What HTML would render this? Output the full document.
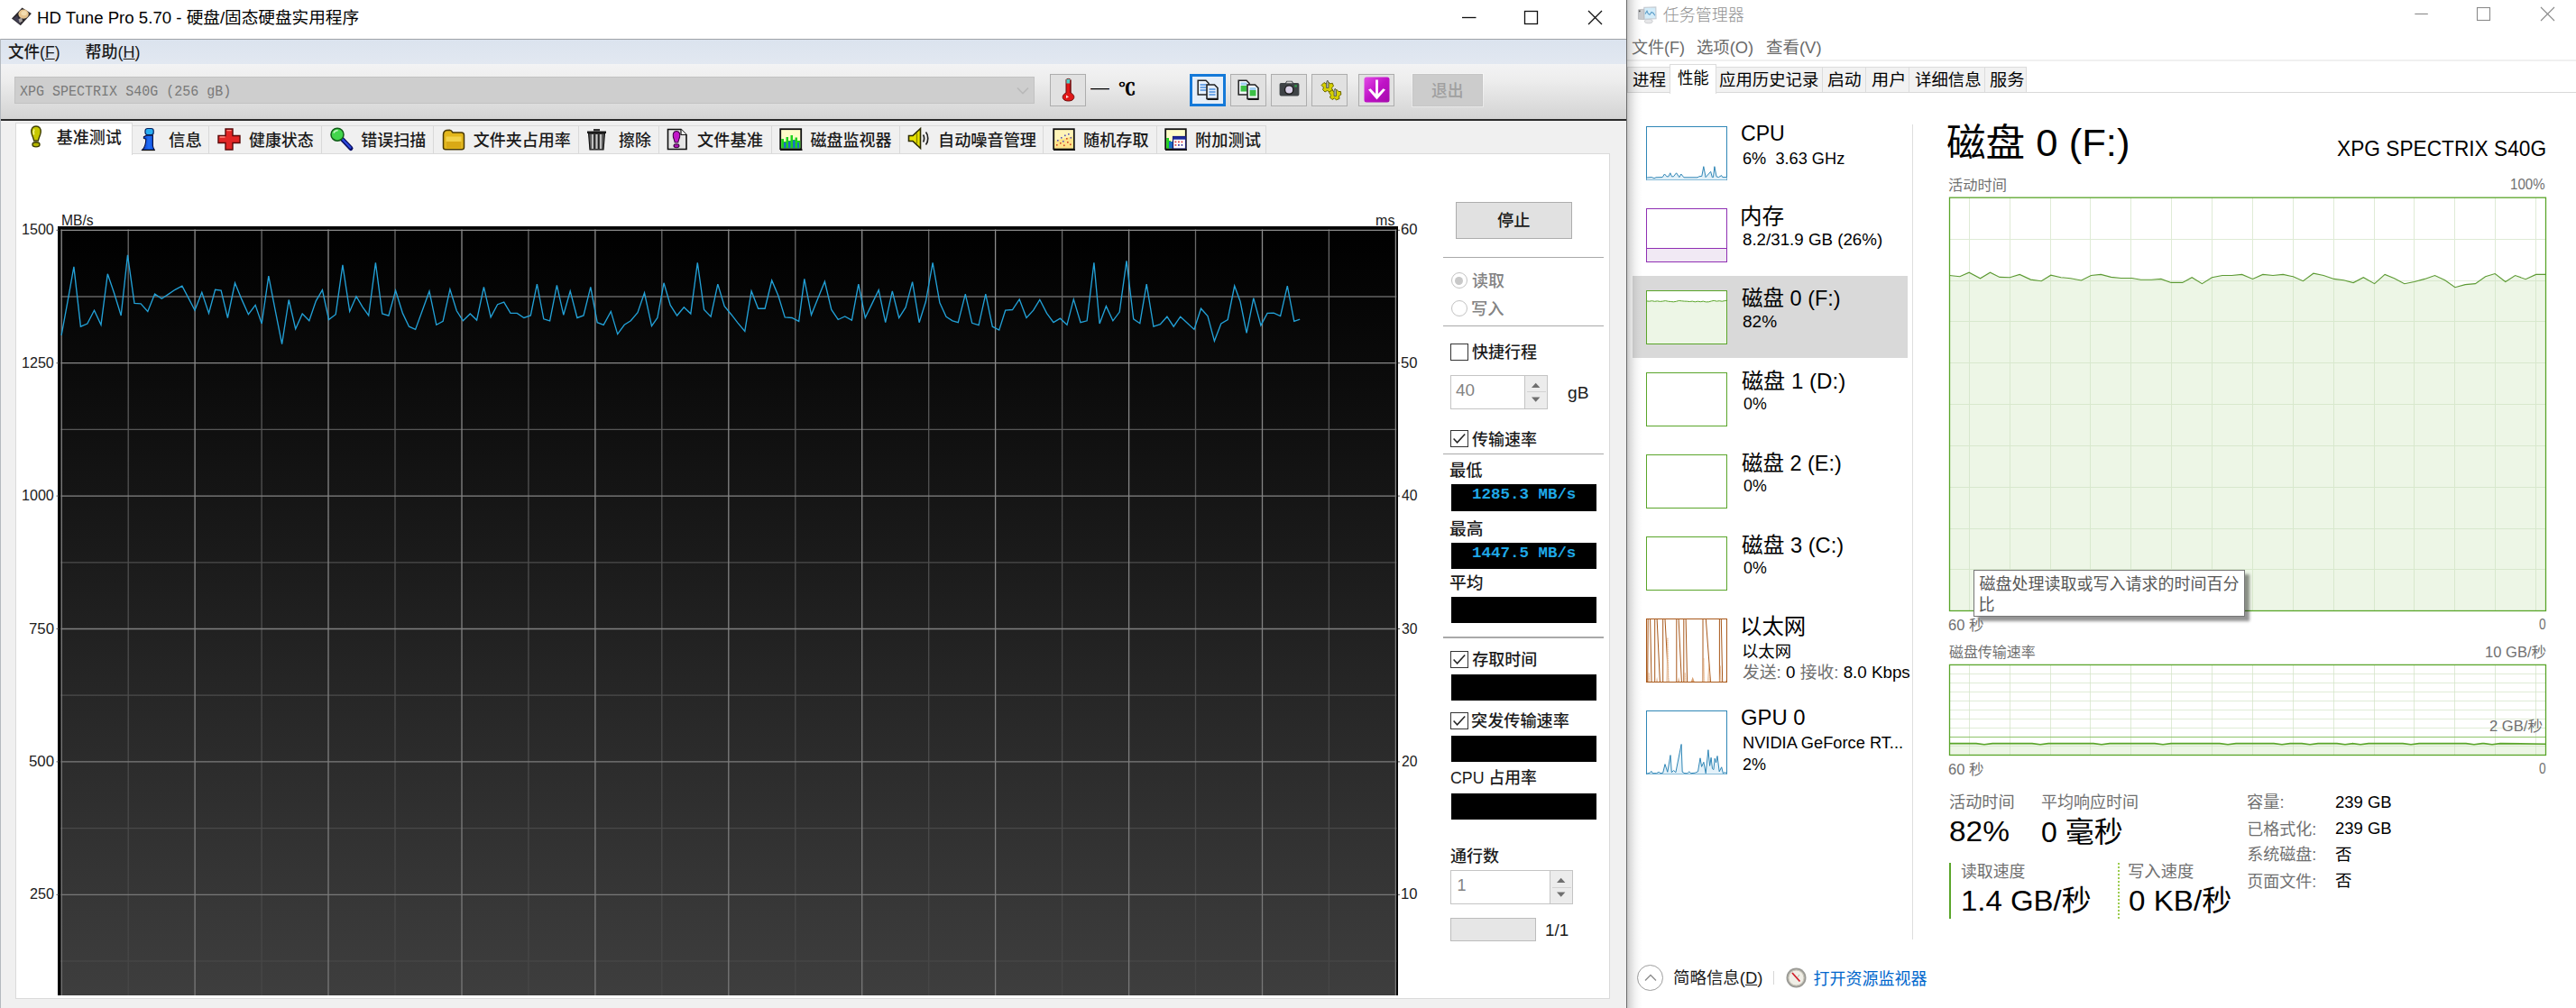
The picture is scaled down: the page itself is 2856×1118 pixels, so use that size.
<!DOCTYPE html>
<html lang="zh-CN"><head><meta charset="utf-8"><title>HD Tune Pro / 任务管理器</title>
<style>
html,body{margin:0;padding:0}
body{width:2856px;height:1118px;position:relative;overflow:hidden;background:#fff}
.t{position:absolute;white-space:nowrap;transform-origin:0 0;display:block}
.b{position:absolute;box-sizing:border-box}
svg{position:absolute;overflow:visible}
</style></head>
<body>
<!-- ================= HD Tune window ================= -->
<div class="b" style="left:0;top:0;width:1804px;height:1118px;background:#f0f0f0"></div>
<div class="b" style="left:0;top:0;width:1804px;height:43px;background:#fff"></div>
<div class="b" style="left:0;top:43px;width:1804px;height:1px;background:#9fa3a8"></div>
<div class="b" style="left:0;top:44px;width:1804px;height:27px;background:linear-gradient(#dbe3ee,#e2e8f1)"></div>
<div class="b" style="left:0;top:71px;width:1804px;height:61px;background:linear-gradient(#f3f3f4 0%,#ededed 30%,#e2e2e2 60%,#d3d3d3 100%)"></div>
<div class="b" style="left:0;top:132px;width:1804px;height:2px;background:#2a2a2a"></div>
<div class="b" style="left:0;top:43px;width:1px;height:1075px;background:#b4b9bf"></div>
<!-- window controls -->
<svg style="left:1610px;top:0" width="190" height="43" viewBox="0 0 190 43" fill="none" stroke="#111" stroke-width="1.3">
<path d="M11 19.5H26.5"/><rect x="80.5" y="12.5" width="14" height="14"/><path d="M151 12L166 27M166 12L151 27"/></svg>
<!-- app icon -->
<svg style="left:12px;top:8px" width="24" height="21" viewBox="0 0 24 21">
<path d="M12.5 .6L22.9 6.9L10.8 20.2L1 12.5Z" fill="#2b282c"/><path d="M2.6 12.7L7 9.2L11.4 17.8L10.6 19Z" fill="#403e52"/><ellipse cx="14.1" cy="7.6" rx="5.7" ry="5.1" fill="#e6c48e"/><ellipse cx="14.6" cy="6.6" rx="3.2" ry="2.6" fill="#f3ddb0"/><path d="M8.5 13.2L12.2 11.4L13 15.6L9.8 17.2Z" fill="#a9a3a0"/></svg>
<!-- combo -->
<div class="b" style="left:16px;top:85px;width:1131px;height:30px;background:#cecece;border:1px solid #c2c2c2"></div>
<svg style="left:1127px;top:96px" width="14" height="9" viewBox="0 0 14 9" fill="none" stroke="#b9b9b9" stroke-width="1.6"><path d="M1 1.5L7 7.5L13 1.5"/></svg>
<!-- toolbar buttons -->
<div class="b" style="left:1164px;top:82px;width:40px;height:36px;background:#e1e1e1;border:1px solid #adadad"></div>
<div class="b" style="left:1318.6px;top:82px;width:40.4px;height:36px;background:#e5eef8;border:3px solid #1479d8"></div>
<div class="b" style="left:1364px;top:82px;width:40px;height:36px;background:#e1e1e1;border:1px solid #adadad"></div>
<div class="b" style="left:1409px;top:82px;width:40px;height:36px;background:#e1e1e1;border:1px solid #adadad"></div>
<div class="b" style="left:1454px;top:82px;width:40px;height:36px;background:#e1e1e1;border:1px solid #adadad"></div>
<div class="b" style="left:1506px;top:82px;width:40px;height:36px;background:#e1e1e1;border:1px solid #adadad"></div>
<div class="b" style="left:1566px;top:82px;width:78px;height:36px;background:#cccccc;border:1px solid #c6c6c6;box-shadow:0 0 0 1px rgba(255,255,255,.35)"></div>
<!-- tab strip -->
<div class="b" style="left:146px;top:139px;width:1258px;height:31px;background:#f0f0f0;border:1px solid #d9d9d9;border-bottom:none"></div>
<div class="b" style="left:231px;top:140px;width:1px;height:30px;background:#d9d9d9"></div>
<div class="b" style="left:356px;top:140px;width:1px;height:30px;background:#d9d9d9"></div>
<div class="b" style="left:480px;top:140px;width:1px;height:30px;background:#d9d9d9"></div>
<div class="b" style="left:640.5px;top:140px;width:1px;height:30px;background:#d9d9d9"></div>
<div class="b" style="left:730px;top:140px;width:1px;height:30px;background:#d9d9d9"></div>
<div class="b" style="left:855px;top:140px;width:1px;height:30px;background:#d9d9d9"></div>
<div class="b" style="left:996.5px;top:140px;width:1px;height:30px;background:#d9d9d9"></div>
<div class="b" style="left:1156px;top:140px;width:1px;height:30px;background:#d9d9d9"></div>
<div class="b" style="left:1281.5px;top:140px;width:1px;height:30px;background:#d9d9d9"></div>
<!-- white page -->
<div class="b" style="left:17px;top:170px;width:1768px;height:938px;background:#fff;border:1px solid #dadada"></div>
<div class="b" style="left:17px;top:136px;width:130px;height:36px;background:#fff;border:1px solid #dadada;border-bottom:none"></div>
<!-- right window edge + shadow -->
<div class="b" style="left:1802.8px;top:0;width:1.3px;height:1118px;background:#6a6a6a"></div>

<!-- HD Tune benchmark chart -->
<div class="b" style="left:64.2px;top:251.2px;width:1485.5px;height:852.8px;background:#000"></div>
<div class="b" style="left:67.6px;top:254.6px;width:1480.6000000000001px;height:849.4px;background:linear-gradient(#000 0%,#0d0d0d 22%,#262626 60%,#3e3e3e 100%)"></div>
<svg style="left:0;top:0" width="1804" height="1118" viewBox="0 0 1804 1118" fill="none">
<defs><linearGradient id="gmi" gradientUnits="userSpaceOnUse" x1="0" y1="255" x2="0" y2="1104"><stop offset="0" stop-color="#6a6a6a"/><stop offset=".35" stop-color="#505050"/><stop offset="1" stop-color="#464646"/></linearGradient><linearGradient id="gma" gradientUnits="userSpaceOnUse" x1="0" y1="255" x2="0" y2="1104"><stop offset="0" stop-color="#8c8c8c"/><stop offset="1" stop-color="#777"/></linearGradient></defs>
<path d="M142.2 254.5V1104M290.1 254.5V1104M438 254.5V1104M585.9 254.5V1104M733.8 254.5V1104M881.8 254.5V1104M1029.7 254.5V1104M1177.6 254.5V1104M1325.5 254.5V1104M1473.4 254.5V1104" stroke="url(#gmi)" stroke-width="1.3"/>
<path d="M67.5 329H1548.3" stroke="#636363" stroke-width="1.3"/>
<path d="M67.5 476.4H1548.3" stroke="#565656" stroke-width="1.3"/>
<path d="M67.5 623.8H1548.3" stroke="#4e4e4e" stroke-width="1.3"/>
<path d="M67.5 771.2H1548.3" stroke="#4c4c4c" stroke-width="1.3"/>
<path d="M67.5 918.6H1548.3" stroke="#494949" stroke-width="1.3"/>
<path d="M67.5 1066H1548.3" stroke="#464646" stroke-width="1.3"/>
<path d="M68.2 254.5V1104M216.1 254.5V1104M364 254.5V1104M512 254.5V1104M659.9 254.5V1104M807.8 254.5V1104M955.7 254.5V1104M1103.6 254.5V1104M1251.6 254.5V1104M1399.5 254.5V1104M1547.4 254.5V1104" stroke="url(#gma)" stroke-width="1.3"/>
<path d="M67.5 255.3H1548.3" stroke="#8b8b8b" stroke-width="1.3"/>
<path d="M67.5 402.7H1548.3" stroke="#888888" stroke-width="1.3"/>
<path d="M67.5 550.1H1548.3" stroke="#848484" stroke-width="1.3"/>
<path d="M67.5 697.5H1548.3" stroke="#818181" stroke-width="1.3"/>
<path d="M67.5 844.9H1548.3" stroke="#7d7d7d" stroke-width="1.3"/>
<path d="M67.5 992.3H1548.3" stroke="#797979" stroke-width="1.3"/>
<path d="M62.5 255.3H65M1550 255.3H1552M62.5 402.7H65M1550 402.7H1552M62.5 550.1H65M1550 550.1H1552M62.5 697.5H65M1550 697.5H1552M62.5 844.9H65M1550 844.9H1552M62.5 992.3H65M1550 992.3H1552" stroke="#555" stroke-width="1"/>
<path d="M68.1 371.9 L75.1 333.8 L81.9 295.8 L89.4 362.2 L96.8 359 L104.5 344.2 L112 360.3 L119.3 303.8 L126.7 325.5 L134.2 350 L141.5 282.9 L149 336.4 L156.1 336.8 L163.8 345.4 L171.6 326.1 L179.3 331.3 L187 326.1 L194.1 321.3 L201.9 317.1 L209 330.6 L216 344.2 L223.8 324.2 L231.5 347.4 L238.6 321.3 L245.1 322.2 L252.4 352.5 L260.5 313.8 L267.9 331.9 L275.4 348.7 L283.1 338.4 L290.2 359 L297.8 306.1 L305.1 343.8 L312.6 381.6 L320.2 332.5 L327.7 364.8 L335.2 348 L342.8 355.8 L350.3 333.8 L357.4 321.6 L364.5 354.5 L372.2 348.7 L379.9 293.9 L387.7 345.4 L395 328.7 L401.9 340.3 L408.7 350 L416.4 291.3 L423.8 348 L430.9 350.2 L438.6 322.2 L446.4 347.4 L453.5 362.2 L460.6 365.4 L468.3 344.2 L476 322.9 L483.8 360.3 L491.1 356.4 L498.9 320.9 L506.3 344.8 L513.4 355.8 L521.3 348 L528.6 355.1 L536.4 318.4 L544.1 351.9 L551.6 337.7 L558.7 335.1 L566 347.4 L573.3 347.4 L580.9 352.5 L588.3 350 L595.4 315.1 L602.8 353.8 L609.6 355.8 L617.4 316.4 L624.8 349.3 L632.2 322.9 L639.9 352.5 L647 350 L654.8 318.4 L662.2 357.7 L669.2 360.3 L677.3 345.4 L684.7 370.6 L692.2 360.3 L699.3 355.8 L707 346.7 L714.5 324.8 L722.5 361.6 L728.9 352.5 L736 313.8 L743.2 338.4 L750.6 350 L758.3 340.7 L765.8 348 L773.3 291.3 L780.6 343.5 L788.1 351.2 L795.8 315.1 L803.2 339.6 L810.7 348.7 L818 358.1 L825.8 367.4 L833.1 322.9 L840.6 342.2 L848.1 342.2 L855.7 311 L862.9 328 L870.2 351.9 L878 352.5 L885.7 356.4 L891.8 309.3 L899.5 349.3 L907 330.6 L914.4 312.3 L921.8 343.5 L929.2 354.5 L936.7 351 L944.4 355.1 L951.8 315.1 L959.3 352.5 L966.7 337.1 L974.2 321.6 L981.7 357.7 L989.3 322.9 L996.7 352.5 L1004.1 340.9 L1011.6 312.6 L1019.1 357.7 L1026.4 334.5 L1034.1 291.3 L1041.9 335.8 L1049 351.2 L1056.1 355.8 L1062.3 357.7 L1070.3 326.1 L1077.7 358.3 L1085.1 360.7 L1092.8 326.1 L1100.3 362.2 L1107.7 366.1 L1114.7 344.2 L1122.5 343.5 L1130.2 331.9 L1138 352.5 L1145.7 344.2 L1152.8 332.3 L1160.5 347.4 L1168 357.7 L1175.4 353.2 L1183 360.3 L1190.3 331.9 L1198 357.7 L1205.1 355.8 L1212.9 291.3 L1219.1 359 L1226.4 339.6 L1233.9 355.8 L1241.2 346.1 L1249 289.3 L1256.7 353.8 L1263.8 358.7 L1271.2 315.1 L1278.9 362.2 L1286.4 359.6 L1293.9 351.2 L1301.2 362.2 L1308.7 351.2 L1316.3 358.3 L1324 365.4 L1331.5 342.2 L1339 350.6 L1346.4 378.3 L1353.8 359 L1361.2 354.5 L1368.7 317.1 L1375.1 334.5 L1382.1 369.3 L1389.8 330.6 L1397.9 360.9 L1405.1 347.4 L1412.2 347.1 L1419.6 350.6 L1427.3 317.1 L1434.8 356.4 L1441.2 354.1" stroke="#22a0d6" stroke-width="1.35" stroke-linejoin="miter"/>
</svg>
<!-- ================= HD Tune right-hand panel ================= -->
<div class="b" style="left:1614px;top:223.5px;width:129px;height:41px;background:#e1e1e1;border:1px solid #adadad"></div>
<div class="b" style="left:1600px;top:284.5px;width:177.5px;height:1.4px;background:#a9a9a9"></div>
<div class="b" style="left:1600px;top:361px;width:177.5px;height:1.4px;background:#a9a9a9"></div>
<div class="b" style="left:1600px;top:502.6px;width:177.5px;height:1.4px;background:#a9a9a9"></div>
<div class="b" style="left:1600px;top:706.4px;width:177.5px;height:1.4px;background:#a9a9a9"></div>
<!-- radios -->
<div class="b" style="left:1608.5px;top:302px;width:18px;height:18px;border-radius:50%;background:#fff;border:1.3px solid #c3c3c3"></div>
<div class="b" style="left:1613px;top:306.5px;width:9px;height:9px;border-radius:50%;background:#c8c8c8"></div>
<div class="b" style="left:1608.5px;top:333px;width:18px;height:18px;border-radius:50%;background:#fff;border:1.3px solid #c3c3c3"></div>
<!-- checkboxes -->
<div class="b" style="left:1608px;top:381px;width:19.5px;height:19px;background:#fff;border:1.6px solid #333"></div>
<div class="b" style="left:1608px;top:477px;width:19.5px;height:19px;background:#fff;border:1.6px solid #333"></div>
<div class="b" style="left:1608px;top:721.5px;width:19.5px;height:19px;background:#fff;border:1.6px solid #333"></div>
<div class="b" style="left:1608px;top:789.5px;width:19.5px;height:19px;background:#fff;border:1.6px solid #333"></div>
<svg style="left:1608px;top:477px" width="20" height="19" viewBox="0 0 20 19" fill="none" stroke="#222" stroke-width="1.5"><path d="M3.6 9.6L7.6 13.8L16.2 4.6"/></svg>
<svg style="left:1608px;top:721.5px" width="20" height="19" viewBox="0 0 20 19" fill="none" stroke="#222" stroke-width="1.5"><path d="M3.6 9.6L7.6 13.8L16.2 4.6"/></svg>
<svg style="left:1608px;top:789.5px" width="20" height="19" viewBox="0 0 20 19" fill="none" stroke="#222" stroke-width="1.5"><path d="M3.6 9.6L7.6 13.8L16.2 4.6"/></svg>
<!-- spin boxes -->
<div class="b" style="left:1608px;top:415.5px;width:108px;height:38.5px;background:#fff;border:1px solid #c4c4c4"></div>
<div class="b" style="left:1690px;top:415.5px;width:26px;height:38.5px;background:#ececec;border:1px solid #c4c4c4"></div>
<div class="b" style="left:1692.5px;top:434.2px;width:21px;height:1px;background:#d2d2d2"></div>
<svg style="left:1690px;top:415.5px" width="26" height="39" viewBox="0 0 26 39" fill="#6f6f6f"><path d="M8 14L12.7 8.8L17.4 14Z"/><path d="M8 24.5L12.7 29.7L17.4 24.5Z"/></svg>
<div class="b" style="left:1608px;top:964.7px;width:136px;height:38.8px;background:#fff;border:1px solid #c4c4c4"></div>
<div class="b" style="left:1718px;top:964.7px;width:26px;height:38.8px;background:#ececec;border:1px solid #c4c4c4"></div>
<div class="b" style="left:1720.5px;top:983.6px;width:21px;height:1px;background:#d2d2d2"></div>
<svg style="left:1718px;top:964.7px" width="26" height="39" viewBox="0 0 26 39" fill="#6f6f6f"><path d="M8 14L12.7 8.8L17.4 14Z"/><path d="M8 24.5L12.7 29.7L17.4 24.5Z"/></svg>
<!-- black value boxes -->
<div class="b" style="left:1608.8px;top:537px;width:161.2px;height:29.5px;background:#000"></div>
<div class="b" style="left:1608.8px;top:602px;width:161.2px;height:29.3px;background:#000"></div>
<div class="b" style="left:1608.8px;top:662.3px;width:161.2px;height:29px;background:#000"></div>
<div class="b" style="left:1608.8px;top:748px;width:161.2px;height:28.8px;background:#000"></div>
<div class="b" style="left:1608.8px;top:815.5px;width:161.2px;height:29px;background:#000"></div>
<div class="b" style="left:1608.8px;top:880px;width:161.2px;height:29px;background:#000"></div>
<!-- progress -->
<div class="b" style="left:1608px;top:1018.4px;width:94.5px;height:25.4px;background:#e6e6e6;border:1px solid #bcbcbc"></div>

<!-- ================= Task manager window ================= -->
<div class="b" style="left:1804px;top:0;width:1052px;height:1118px;background:#fff"></div>
<!-- title bar -->
<svg style="left:1816px;top:7px" width="21" height="20" viewBox="0 0 21 20"><ellipse cx="11.8" cy="16.6" rx="4.4" ry="2.2" fill="#e6e6e8" stroke="#c2c4c8" stroke-width=".8"/><path d="M6.8 1.4L19.8 .9L20 13.6L7 14.4Z" fill="#d3ecf9" stroke="#c5cdd4" stroke-width="1.2"/><path d="M8 8.5L10 5.2L11.4 8.4L13 9.2L15 6.4L17 7.4L18.8 10.2" fill="none" stroke="#5a9cc8" stroke-width="1.1"/><path d="M.4 3.8L6.6 3.2V14.6L.4 14.2Z" fill="#c9cbce" stroke="#b3b5b8" stroke-width=".7"/><path d="M1 4.6L2.6 4.4V6L1 6.2Z" fill="#555"/></svg>
<svg style="left:2660px;top:0" width="190" height="36" viewBox="0 0 190 36" fill="none" stroke="#8a8a8a" stroke-width="1.1"><path d="M17.3 15.5H31.8"/><rect x="86.5" y="8.5" width="14" height="14"/><path d="M157 8L172 23M172 8L157 23"/></svg>
<div class="b" style="left:1804px;top:66px;width:1052px;height:2px;background:#f0f0f0"></div>
<!-- tabs -->
<div class="b" style="left:1804px;top:73.5px;width:442.5px;height:29.5px;background:#f2f2f2;border:1px solid #dcdcdc"></div>
<div class="b" style="left:1804px;top:102px;width:1052px;height:1px;background:#d9d9d9"></div>
<div class="b" style="left:2020.2px;top:74px;width:1px;height:28px;background:#dcdcdc"></div>
<div class="b" style="left:2068.2px;top:74px;width:1px;height:28px;background:#dcdcdc"></div>
<div class="b" style="left:2116.2px;top:74px;width:1px;height:28px;background:#dcdcdc"></div>
<div class="b" style="left:2200.2px;top:74px;width:1px;height:28px;background:#dcdcdc"></div>
<div class="b" style="left:1851px;top:71px;width:51.5px;height:33px;background:#fff;border:1px solid #dcdcdc;border-bottom:none"></div>
<!-- sidebar -->
<div class="b" style="left:1810.3px;top:306px;width:304.7px;height:90.6px;background:#d9d9d9"></div>
<div class="b" style="left:2120px;top:138px;width:1px;height:904px;background:#dedede"></div>
<div class="b" style="left:1825px;top:231px;width:90px;height:60px;background:#fff;border:1px solid #8f2fb3"></div>
<div class="b" style="left:1826px;top:275px;width:88px;height:15px;background:#f1e9f4;border-top:1px solid #8f2fb3"></div>
<div class="b" style="left:1825px;top:413px;width:90px;height:60px;background:#fff;border:1px solid #5aa52a"></div>
<div class="b" style="left:1825px;top:504px;width:90px;height:60px;background:#fff;border:1px solid #5aa52a"></div>
<div class="b" style="left:1825px;top:595px;width:90px;height:60px;background:#fff;border:1px solid #5aa52a"></div>
<!-- stats markers -->
<div class="b" style="left:2161px;top:957.3px;width:2px;height:61.3px;background:#5aa52a"></div>
<div class="b" style="left:2348px;top:957.3px;width:0;height:61.3px;border-left:2px dotted #9ccc4f"></div>
<!-- footer -->
<div class="b" style="left:1815.1px;top:1070.1px;width:29px;height:29px;border-radius:50%;border:1px solid #9d9d9d;background:#fff"></div>
<svg style="left:1815.6px;top:1070.8px" width="28" height="28" viewBox="0 0 28 28" fill="none" stroke="#8c8c8c" stroke-width="1.3"><path d="M8 16.5L14 10.5L20 16.5"/></svg>
<div class="b" style="left:1966px;top:1076.5px;width:1px;height:15px;background:#d6d6d6"></div>
<svg style="left:1979.5px;top:1072.5px" width="23" height="23" viewBox="0 0 23 23"><circle cx="11.5" cy="11.5" r="11" fill="#9a9a95"/><circle cx="11.5" cy="11.5" r="8.6" fill="#f0eee6" stroke="#c9c6ba" stroke-width="1.2"/><path d="M7 6L15.5 15.5" stroke="#d0202a" stroke-width="1.8"/><path d="M15 8L12.8 11" stroke="#b9b5a6" stroke-width="1"/></svg>

<!-- Task manager graphs -->
<svg style="left:0;top:0" width="2856" height="1118" viewBox="0 0 2856 1118" fill="none">
<path d="M2161.5 305.5 L2172.8 306.8 L2183.1 302.2 L2195.5 308.8 L2206.5 302.2 L2217 307.4 L2228.3 307.7 L2239.2 304.4 L2251.4 310.1 L2263.2 311.7 L2273.8 305.2 L2285 307.7 L2295.6 308.8 L2307.5 311 L2318.4 305.5 L2329.2 304.4 L2340.5 307.4 L2351.7 308.5 L2363.6 308.5 L2373.5 310.3 L2385.3 310.3 L2395.9 309.4 L2407.1 313.4 L2419.7 313.4 L2430.2 307.7 L2441.4 314.7 L2452.4 307.7 L2463.9 305.5 L2474.4 305.5 L2485.6 304.4 L2497.5 309.4 L2508.8 304.4 L2520 305.5 L2531.2 304.4 L2542.4 306.8 L2553.4 311.7 L2564.9 303.2 L2576.1 305.5 L2587.7 309.4 L2598.5 310.7 L2609.1 313.6 L2620.3 307.7 L2632.6 314.7 L2644.1 304.4 L2654.6 308.8 L2665.8 314.7 L2676.7 312.5 L2688.3 309.4 L2699.5 305.5 L2710.7 310.7 L2721.9 318.7 L2733.2 315.6 L2744.4 314.6 L2755.6 306.8 L2766.2 303.5 L2777.8 312.5 L2788.6 305.5 L2800.1 309.7 L2811.7 304.4 L2822.5 304.4 L2822.5 677.5 L2161.5 677.5Z" fill="#edf6e6"/>
<path d="M2183.5 219.2V677.5M2228.5 219.2V677.5M2273.5 219.2V677.5M2317.5 219.2V677.5M2362.5 219.2V677.5M2407.5 219.2V677.5M2452.5 219.2V677.5M2497.5 219.2V677.5M2542.5 219.2V677.5M2587.5 219.2V677.5M2632.5 219.2V677.5M2676.5 219.2V677.5M2721.5 219.2V677.5M2766.5 219.2V677.5M2811.5 219.2V677.5M2161.5 265.5H2822.5M2161.5 311.5H2822.5M2161.5 356.5H2822.5M2161.5 402.5H2822.5M2161.5 448.5H2822.5M2161.5 494.5H2822.5M2161.5 540.5H2822.5M2161.5 586.5H2822.5M2161.5 631.5H2822.5" stroke="#cbdebd" stroke-opacity=".62" stroke-width="1" shape-rendering="crispEdges"/>
<path d="M2161.5 305.5 L2172.8 306.8 L2183.1 302.2 L2195.5 308.8 L2206.5 302.2 L2217 307.4 L2228.3 307.7 L2239.2 304.4 L2251.4 310.1 L2263.2 311.7 L2273.8 305.2 L2285 307.7 L2295.6 308.8 L2307.5 311 L2318.4 305.5 L2329.2 304.4 L2340.5 307.4 L2351.7 308.5 L2363.6 308.5 L2373.5 310.3 L2385.3 310.3 L2395.9 309.4 L2407.1 313.4 L2419.7 313.4 L2430.2 307.7 L2441.4 314.7 L2452.4 307.7 L2463.9 305.5 L2474.4 305.5 L2485.6 304.4 L2497.5 309.4 L2508.8 304.4 L2520 305.5 L2531.2 304.4 L2542.4 306.8 L2553.4 311.7 L2564.9 303.2 L2576.1 305.5 L2587.7 309.4 L2598.5 310.7 L2609.1 313.6 L2620.3 307.7 L2632.6 314.7 L2644.1 304.4 L2654.6 308.8 L2665.8 314.7 L2676.7 312.5 L2688.3 309.4 L2699.5 305.5 L2710.7 310.7 L2721.9 318.7 L2733.2 315.6 L2744.4 314.6 L2755.6 306.8 L2766.2 303.5 L2777.8 312.5 L2788.6 305.5 L2800.1 309.7 L2811.7 304.4 L2822.5 304.4" stroke="#5c9a33" stroke-width="1.1"/>
<rect x="2161.5" y="219.2" width="661.0" height="458.3" stroke="#5aa52a" stroke-width="1.3"/>
<path d="M2161.5 824.6 L2191 824.6 L2200 825.7 L2209 824.6 L2253 824.6 L2262 825.7 L2271 824.6 L2321 824.6 L2330 825.7 L2339 824.6 L2389 824.6 L2398 825.7 L2407 824.6 L2461 824.6 L2470 825.7 L2479 824.6 L2521 824.6 L2530 825.7 L2539 824.6 L2552 824.6 L2561 825.7 L2570 824.6 L2591 824.6 L2600 825.7 L2609 824.6 L2608 824.6 L2617 825.7 L2626 824.6 L2664 824.6 L2673 825.7 L2682 824.6 L2734 824.6 L2743 825.7 L2752 824.6 L2754 824.6 L2763 825.7 L2772 824.6 L2822.5 825.2 L2822.5 837.5 L2161.5 837.5Z" fill="#edf6e6"/>
<path d="M2183.5 737.4V837.5M2228.5 737.4V837.5M2273.5 737.4V837.5M2317.5 737.4V837.5M2362.5 737.4V837.5M2407.5 737.4V837.5M2452.5 737.4V837.5M2497.5 737.4V837.5M2542.5 737.4V837.5M2587.5 737.4V837.5M2632.5 737.4V837.5M2676.5 737.4V837.5M2721.5 737.4V837.5M2766.5 737.4V837.5M2811.5 737.4V837.5" stroke="#cbdebd" stroke-opacity=".62" stroke-width="1" shape-rendering="crispEdges"/>
<path d="M2161.5 747.5H2822.5M2161.5 757.5H2822.5M2161.5 767.5H2822.5M2161.5 777.5H2822.5M2161.5 787.5H2822.5M2161.5 797.5H2822.5M2161.5 807.5H2822.5M2161.5 827.5H2822.5" stroke="#d3e4c6" stroke-opacity=".7" stroke-width="1" shape-rendering="crispEdges"/>
<path d="M2161.5 817.5H2822.5" stroke="#8fc46a" stroke-width="1.2"/>
<path d="M2161.5 824.6 L2191 824.6 L2200 825.7 L2209 824.6 L2253 824.6 L2262 825.7 L2271 824.6 L2321 824.6 L2330 825.7 L2339 824.6 L2389 824.6 L2398 825.7 L2407 824.6 L2461 824.6 L2470 825.7 L2479 824.6 L2521 824.6 L2530 825.7 L2539 824.6 L2552 824.6 L2561 825.7 L2570 824.6 L2591 824.6 L2600 825.7 L2609 824.6 L2608 824.6 L2617 825.7 L2626 824.6 L2664 824.6 L2673 825.7 L2682 824.6 L2734 824.6 L2743 825.7 L2752 824.6 L2754 824.6 L2763 825.7 L2772 824.6 L2822.5 825.2" stroke="#5aa52a" stroke-width="1.6"/>
<rect x="2161.5" y="737.4" width="661.0" height="100.10000000000002" stroke="#5aa52a" stroke-width="1.3"/>
</svg>
<!-- sidebar thumbnails -->
<svg style="left:0;top:0" width="2856" height="1118" viewBox="0 0 2856 1118" fill="none">
<rect x="1825.5" y="140.5" width="89" height="59" fill="#fff" stroke="#2f86b6" stroke-width="1"/>
<path d="M1826.1 197 L1831.2 196.6 L1834 197.8 L1836 196.8 L1843.1 196.6 L1845.5 193 L1847.9 195.8 L1849.9 195.8 L1851.8 191.8 L1853.4 195.8 L1855.4 195.8 L1858.6 191.8 L1861.8 196.6 L1863.8 193 L1866.9 196.8 L1882 196.8 L1883.6 195.8 L1886.8 195.4 L1888.8 184.7 L1891.1 196.6 L1896.7 190.3 L1898.3 196.6 L1899.5 196.6 L1900.9 184.7 L1903 195.8 L1905.4 196.6 L1908.6 194.6 L1909.8 196.6 L1914.5 196.6 L1914.5 199.5 L1825.5 199.5Z" fill="#e3f1f9"/>
<path d="M1826.1 197 L1831.2 196.6 L1834 197.8 L1836 196.8 L1843.1 196.6 L1845.5 193 L1847.9 195.8 L1849.9 195.8 L1851.8 191.8 L1853.4 195.8 L1855.4 195.8 L1858.6 191.8 L1861.8 196.6 L1863.8 193 L1866.9 196.8 L1882 196.8 L1883.6 195.8 L1886.8 195.4 L1888.8 184.7 L1891.1 196.6 L1896.7 190.3 L1898.3 196.6 L1899.5 196.6 L1900.9 184.7 L1903 195.8 L1905.4 196.6 L1908.6 194.6 L1909.8 196.6 L1914.5 196.6" stroke="#2f86b6" stroke-width="1"/>
<rect x="1825.5" y="322.5" width="89" height="59" fill="#fff" stroke="#5aa52a" stroke-width="1"/>
<path d="M1825.5 333.9 L1828.5 334.2 L1831.5 333.7 L1834.5 334.3 L1837.5 333.9 L1840.5 334.4 L1843.4 334.1 L1846.4 333.6 L1849.4 334.2 L1852.4 334.5 L1855.4 334.8 L1858.4 334.3 L1861.4 333.5 L1864.4 333.8 L1867.4 334.1 L1870.3 334.2 L1873.3 334.5 L1876.3 334.1 L1879.3 334.8 L1882.3 334.2 L1885.3 334.7 L1888.3 334.1 L1891.3 334.9 L1894.3 334.8 L1897.3 334 L1900.2 333.4 L1903.2 334.1 L1906.2 333.7 L1909.2 334.2 L1912.2 333.6 L1915.2 333.3 L1914.5 381.5 L1825.5 381.5Z" fill="#edf6e6"/>
<path d="M1825.5 333.9 L1828.5 334.2 L1831.5 333.7 L1834.5 334.3 L1837.5 333.9 L1840.5 334.4 L1843.4 334.1 L1846.4 333.6 L1849.4 334.2 L1852.4 334.5 L1855.4 334.8 L1858.4 334.3 L1861.4 333.5 L1864.4 333.8 L1867.4 334.1 L1870.3 334.2 L1873.3 334.5 L1876.3 334.1 L1879.3 334.8 L1882.3 334.2 L1885.3 334.7 L1888.3 334.1 L1891.3 334.9 L1894.3 334.8 L1897.3 334 L1900.2 333.4 L1903.2 334.1 L1906.2 333.7 L1909.2 334.2 L1912.2 333.6 L1915.2 333.3" stroke="#5aa52a" stroke-width="1"/>
<rect x="1825.5" y="322.5" width="89" height="59" stroke="#5aa52a" stroke-width="1"/>
<rect x="1825.5" y="686.5" width="89" height="70" fill="#fff" stroke="#a8581a" stroke-width="1"/>
<path d="M1826.7 756.5L1827.2 686.5M1829.6 686.5L1831 756.5M1834.7 756.5L1834.7 686.5M1837.1 686.5L1840.4 756.5M1843.7 756.5L1843.7 686.5M1846 686.5L1849.8 756.5M1858.8 756.5L1858.8 686.5M1861.1 686.5L1864.4 756.5M1866.8 756.5L1866.8 686.5M1869.1 686.5L1870.6 756.5M1888 756.5L1888 686.5M1891.3 686.5L1896.5 756.5M1906.4 756.5L1906.4 686.5M1908.3 686.5L1909.7 756.5" stroke="#a8581a" stroke-width="1"/>
<path d="M1847.7 756.5L1848.9 707.4L1850 756.5ZM1888.1 756.5L1888.9 730L1889.8 756.5ZM1893.3 756.5L1894.6 736.6L1895.9 756.5ZM1906.5 756.5L1907.3 738.5L1908.2 756.5ZM1827.5 756.5L1828.1 746.1L1828.8 756.5ZM1867.4 756.5L1868.2 746.1L1868.9 756.5Z" fill="#f0d9c6" stroke="#dd9a62" stroke-width=".8" stroke-dasharray="1 1"/>
<path d="M1874.6 756.5L1876.7 750.8L1878.8 756.5ZM1913.1 756.5L1914.4 752.2L1914.5 756.5ZM1860.2 756.5L1861.1 750.8L1862.1 756.5ZM1836.3 756.5L1837.1 750.8L1837.8 756.5Z" fill="#d9a071"/>
<rect x="1825.5" y="686.5" width="89" height="70" stroke="#a8581a" stroke-width="1"/>
<rect x="1825.5" y="788.5" width="89" height="70" fill="#fff" stroke="#2f86b6" stroke-width="1"/>
<path d="M1826 858.1 L1829.1 857.2 L1831 855.4 L1832.3 857.7 L1836.4 857.7 L1839.2 856.3 L1841 857.7 L1843.7 857.2 L1846 847.6 L1848.8 856.3 L1852 837.6 L1853.3 856.7 L1855.6 854.5 L1857.9 856.7 L1864.1 825.5 L1865.2 856.3 L1867.9 857.7 L1870.7 857.7 L1872.9 855.8 L1874.8 857.7 L1879.3 857.2 L1882.5 855.8 L1885 840.8 L1886.6 850.4 L1888.9 845.3 L1891.2 857.7 L1893.9 831.7 L1895.6 849.4 L1897.1 840.3 L1898.5 852.6 L1899.9 853.6 L1901.2 841.2 L1902.6 845.8 L1904 838.5 L1906.2 855.8 L1908.7 850.8 L1910.4 857.7 L1912.2 856.7 L1914.9 857.7 L1914.5 858.5 L1825.5 858.5Z" fill="#e3f1f9"/>
<path d="M1826 858.1 L1829.1 857.2 L1831 855.4 L1832.3 857.7 L1836.4 857.7 L1839.2 856.3 L1841 857.7 L1843.7 857.2 L1846 847.6 L1848.8 856.3 L1852 837.6 L1853.3 856.7 L1855.6 854.5 L1857.9 856.7 L1864.1 825.5 L1865.2 856.3 L1867.9 857.7 L1870.7 857.7 L1872.9 855.8 L1874.8 857.7 L1879.3 857.2 L1882.5 855.8 L1885 840.8 L1886.6 850.4 L1888.9 845.3 L1891.2 857.7 L1893.9 831.7 L1895.6 849.4 L1897.1 840.3 L1898.5 852.6 L1899.9 853.6 L1901.2 841.2 L1902.6 845.8 L1904 838.5 L1906.2 855.8 L1908.7 850.8 L1910.4 857.7 L1912.2 856.7 L1914.9 857.7" stroke="#2f86b6" stroke-width="1"/>
</svg>
<!-- ================= icons ================= -->
<!-- tab 1: bulb / exclamation -->
<svg style="left:33px;top:138.5px" width="14" height="25" viewBox="0 0 14 25"><path d="M7 1C3.2 1 1.5 4 1.8 7.5C2.1 11 4 13.5 4.6 17H9.4C10 13.5 11.9 11 12.2 7.5C12.5 4 10.8 1 7 1Z" fill="#c6c800" stroke="#3d3d00" stroke-width="1.4"/><path d="M5 4.5C4 6 4 8.5 4.6 10.5" stroke="#f4f58a" stroke-width="1.6" fill="none"/><ellipse cx="7" cy="21.3" rx="4" ry="2.6" fill="#b4b600" stroke="#3d3d00" stroke-width="1.4"/></svg>
<!-- tab 2: info -->
<svg style="left:156px;top:142px" width="17" height="25" viewBox="0 0 17 25"><defs><linearGradient id="ig" x1="0" y1="0" x2="1" y2="0"><stop offset="0" stop-color="#0b35c9"/><stop offset=".55" stop-color="#1f6ef5"/><stop offset="1" stop-color="#0d48de"/></linearGradient></defs><rect x="5" y=".5" width="9.2" height="7" rx="2.6" fill="#29aef2" stroke="#08205f" stroke-width="1.2"/><path d="M3.4 9.8L6.2 8.2H13.4V19.5C13.6 21.6 14.6 23 15.2 24.4H1.6C2.8 23 5.6 21 5.8 12.2L3.4 11.4Z" fill="url(#ig)" stroke="#060e3a" stroke-width="1.1"/><path d="M1.4 24.5H15.6" stroke="#111" stroke-width="1.2"/></svg>
<!-- tab 3: red cross -->
<svg style="left:240.5px;top:142px" width="26" height="25" viewBox="0 0 26 25"><path d="M9 1H17V8.5H25V16.5H17V24H9V16.5H1V8.5H9Z" fill="#e22626" stroke="#5a0a0a" stroke-width="1.4"/><path d="M10.5 2.6H15.5M2.6 10H8.5" stroke="#ff8d86" stroke-width="1.4"/></svg>
<!-- tab 4: magnifier -->
<svg style="left:365px;top:141px" width="27" height="26" viewBox="0 0 27 26"><path d="M14 13L24 23.5" stroke="#0a0f66" stroke-width="5" stroke-linecap="round"/><path d="M14.5 13.2L23.5 22.8" stroke="#2c49e0" stroke-width="2.2" stroke-linecap="round"/><circle cx="9" cy="8.2" r="7" fill="#43d64c" stroke="#115c18" stroke-width="1.5"/><path d="M5 6.5C5.8 4.5 7.6 3.6 9.6 3.8" stroke="#c6f7c6" stroke-width="1.6" fill="none"/></svg>
<!-- tab 5: folder -->
<svg style="left:489.5px;top:142.5px" width="26" height="24" viewBox="0 0 26 24"><path d="M1.5 6.5C1.5 3.5 3 2 5 1.5L8.5 1.2C10 1.2 11 2.5 12 4H21.5C23.5 4 24.5 5.3 24.5 7V20.5C24.5 22 23.5 22.8 22 22.8H4C2.5 22.8 1.5 22 1.5 20.5Z" fill="#e3b71c" stroke="#4a3a05" stroke-width="1.5"/><path d="M4.5 8.5H21.5V21H4.5Z" fill="#f2d24a"/><path d="M4.5 14H21.5V21H4.5Z" fill="#d9a915"/></svg>
<!-- tab 6: trash -->
<svg style="left:650px;top:142px" width="23" height="25" viewBox="0 0 23 25"><path d="M1 3.5H22V6H1Z" fill="#1c1c1c"/><path d="M8 1H15V3.5H8Z" fill="#333"/><path d="M2.6 6H20.4L19 24H4Z" fill="#5d5d5d" stroke="#111" stroke-width="1.2"/><path d="M7 7V23M11.5 7V23M16 7V23" stroke="#c9c9c9" stroke-width="1.8"/><path d="M9 7V23M13.7 7V23" stroke="#222" stroke-width="1.4"/></svg>
<!-- tab 7: file benchmark -->
<svg style="left:739px;top:142px" width="24" height="25" viewBox="0 0 24 25"><path d="M1.5 1.5H16L22 7.5V23.5H1.5Z" fill="#e6e6e6" stroke="#111" stroke-width="1.6"/><path d="M16 1.5V7.5H22" fill="#fff" stroke="#111" stroke-width="1.2"/><path d="M11 3.5C7.6 3.5 6.8 7 7.4 9.8C7.9 12 8.8 13.5 9.2 16H12.8C13.2 13.5 14.1 12 14.6 9.8C15.2 7 14.4 3.5 11 3.5Z" fill="#c218c9" stroke="#3b0640" stroke-width="1.1"/><ellipse cx="11" cy="19.8" rx="3" ry="1.9" fill="#b010b8" stroke="#3b0640" stroke-width="1.1"/></svg>
<!-- tab 8: disk monitor -->
<svg style="left:863.5px;top:142px" width="26" height="25" viewBox="0 0 26 25"><rect x="1.2" y="1.2" width="23" height="22" fill="#fdfcc8" stroke="#111" stroke-width="1.8"/><path d="M2.2 12H5V15H7.5V10H10V14H12.5V8H15V13H17.5V10.5H20V14H23.3V22.2H2.2Z" fill="#1fd21f"/><path d="M5 16H7.5V22.2H5ZM10 15H12.5V22.2H10ZM15 13.5H17.5V22.2H15ZM20 16H22V22.2H20Z" fill="#1d6cc8"/><path d="M1 24.2H25.5" stroke="#111" stroke-width="1.6"/></svg>
<!-- tab 9: speaker -->
<svg style="left:1006px;top:141px" width="27" height="25" viewBox="0 0 27 25"><path d="M1.5 9.5H6L14.5 1.5V23.5L6 15.5H1.5Z" fill="#e6e200" stroke="#2c2a00" stroke-width="1.6"/><path d="M10.5 6.5V18.5" stroke="#8a8600" stroke-width="1.4"/><path d="M17.5 8.5C19 10.5 19 14.5 17.5 16.5M20.5 5.5C23.5 9 23.5 16 20.5 19.5" fill="none" stroke="#222" stroke-width="1.7"/></svg>
<!-- tab 10: random access -->
<svg style="left:1166.5px;top:142px" width="26" height="25" viewBox="0 0 26 25"><rect x="1.2" y="1.2" width="22.6" height="22" fill="#fff4b8" stroke="#111" stroke-width="1.8"/><path d="M2.2 14L23 9V22.4H2.2Z" fill="#fde38a"/><g fill="#5a53b8"><rect x="5" y="13" width="1.6" height="1.6"/><rect x="9" y="10" width="1.6" height="1.6"/><rect x="13" y="7.5" width="1.6" height="1.6"/><rect x="17" y="6" width="1.6" height="1.6"/><rect x="19.5" y="10" width="1.6" height="1.6"/><rect x="11" y="14" width="1.6" height="1.6"/></g><g fill="#d1462a"><rect x="4" y="18" width="1.6" height="1.6"/><rect x="8" y="16" width="1.6" height="1.6"/><rect x="12" y="18.5" width="1.6" height="1.6"/><rect x="16" y="15" width="1.6" height="1.6"/><rect x="19" y="17.5" width="1.6" height="1.6"/><rect x="15" y="11" width="1.6" height="1.6"/></g><path d="M1 24.2H25" stroke="#111" stroke-width="1.6"/></svg>
<!-- tab 11: extra tests -->
<svg style="left:1290.5px;top:142px" width="26" height="25" viewBox="0 0 26 25"><rect x="1.2" y="1.2" width="22.6" height="22" fill="#fdfcc8" stroke="#111" stroke-width="1.8"/><path d="M2.2 11H5V14H7V22.4H2.2Z" fill="#1fd21f"/><path d="M5 15H9V22.4H5Z" fill="#1d6cc8"/><rect x="9.5" y="9.5" width="14" height="13.5" fill="#fff" stroke="#1b1b6a" stroke-width="1.2"/><rect x="9.5" y="9.5" width="14" height="3.2" fill="#1b2a9a"/><g fill="#d44"><rect x="11.5" y="14.5" width="1.8" height="1.8"/><rect x="15" y="14.5" width="1.8" height="1.8"/><rect x="18.5" y="14.5" width="1.8" height="1.8"/><rect x="11.5" y="18" width="1.8" height="1.8"/></g><g fill="#44a"><rect x="15" y="18" width="1.8" height="1.8"/><rect x="18.5" y="18" width="1.8" height="1.8"/></g><path d="M1 24.2H25" stroke="#111" stroke-width="1.6"/></svg>
<!-- toolbar: thermometer -->
<svg style="left:1176px;top:86px" width="17" height="27" viewBox="0 0 17 27"><path d="M6 2.5C6 1 11 1 11 2.5V17C13.5 18.2 14.8 20 14.8 21.5C14.8 24.5 12 26 8.5 26C5 26 2.2 24.5 2.2 21.5C2.2 20 3.5 18.2 6 17Z" fill="#e01818" stroke="#6d0a0a" stroke-width="1"/><path d="M6.4 2.6C6.4 1.5 10.6 1.5 10.6 2.6V6.5H6.4Z" fill="#4fd0c8"/><path d="M6 19.5L9 21.5L6 23Z" fill="#fff" opacity=".85"/><path d="M10.8 3V17" stroke="#7a0c0c" stroke-width="1.2"/></svg>
<!-- toolbar: copy text -->
<svg style="left:1327px;top:88px" width="25" height="23" viewBox="0 0 25 23"><path d="M1.2 1.2H10L13 4.2V17H1.2Z" fill="#eaf2fb" stroke="#222" stroke-width="1.5"/><path d="M3.5 6H10.5M3.5 9H10.5M3.5 12H10.5" stroke="#4a8fe0" stroke-width="1.6"/><path d="M11 6H19.5L23 9.5V21.5H11Z" fill="#e3edf9" stroke="#222" stroke-width="1.6"/><path d="M13.5 11H20.5M13.5 14H20.5M13.5 17H20.5" stroke="#4a8fe0" stroke-width="1.6"/><path d="M11.5 22.3H23.6" stroke="#111" stroke-width="1.4"/></svg>
<!-- toolbar: copy image -->
<svg style="left:1372px;top:88px" width="25" height="23" viewBox="0 0 25 23"><path d="M1.2 1.2H10L13 4.2V17H1.2Z" fill="#f4f7fb" stroke="#222" stroke-width="1.5"/><rect x="3.5" y="7" width="7" height="6.5" fill="#3cc046"/><rect x="3.5" y="3.5" width="7" height="3" fill="#9fd0f2"/><path d="M11 6H19.5L23 9.5V21.5H11Z" fill="#f4f7fb" stroke="#222" stroke-width="1.6"/><rect x="13.5" y="12" width="7" height="6.5" fill="#3cc046"/><rect x="13.5" y="9" width="7" height="3" fill="#9fd0f2"/><path d="M11.5 22.3H23.6" stroke="#111" stroke-width="1.4"/></svg>
<!-- toolbar: camera -->
<svg style="left:1417.5px;top:89px" width="23" height="18" viewBox="0 0 23 18"><path d="M7 3L8.5 .8H14.5L16 3H20.5C21.8 3 22.4 3.8 22.4 5V15.5C22.4 16.6 21.8 17.4 20.5 17.4H2.5C1.2 17.4.6 16.6.6 15.5V5C.6 3.8 1.2 3 2.5 3Z" fill="#3e4346"/><path d="M9 1.6H14L15 3.2H8Z" fill="#d7d7d7"/><circle cx="11.2" cy="10.6" r="4.7" fill="#d9d1e8" stroke="#1c1c1c" stroke-width="1.4"/><rect x="17.3" y="5.3" width="2.6" height="2.2" fill="#31a24c"/></svg>
<!-- toolbar: gears -->
<svg style="left:1462px;top:88px" width="26" height="24" viewBox="0 0 26 24"><g fill="#d6d000" stroke="#6a6500" stroke-width="1"><path d="M3 6.5L6 3.5L8 5L10.5 2.5L13 5L15.2 4.2L16.5 7.5L14.5 9.5L15.5 12L12 14L9.5 12.5L7 14L4.5 11.5L5.5 9Z"/><path d="M11.5 14.5L14.5 12L17 13.5L19.5 11L22 13.5L24.5 13.5L24.8 17L22.5 18.5L23 21.5L19.5 22.8L17.5 21L15 22.5L12.5 20L13.5 17.5Z"/></g><path d="M8.5 3.5L9.8 1L11 3.5V9.5H8.5Z" fill="#a9b0a0" stroke="#4c5048" stroke-width=".8"/><path d="M17 12.5L18.3 10L19.5 12.5V18.5H17Z" fill="#a9b0a0" stroke="#4c5048" stroke-width=".8"/></svg>
<!-- toolbar: purple arrow -->
<svg style="left:1512px;top:84.5px" width="29" height="29" viewBox="0 0 29 29"><defs><linearGradient id="pg" x1="0" y1="0" x2="1" y2="1"><stop offset="0" stop-color="#e24be6"/><stop offset=".5" stop-color="#bf12c6"/><stop offset="1" stop-color="#a40bab"/></linearGradient></defs><rect x=".5" y=".5" width="28" height="28" rx="2.5" fill="url(#pg)"/><path d="M14.5 3.5V21" stroke="#fff" stroke-width="2.8"/><path d="M5 14.5L14.5 25.5L24 14.5L21.5 13.2L14.5 20.6L7.5 13.2Z" fill="#fff"/></svg>

<!-- tooltip -->
<div class="b" style="left:2188.3px;top:632.2px;width:300.3px;height:52.2px;background:#fff;border:1px solid #767676;box-shadow:5px 5px 3px rgba(0,0,0,.42)"></div>
<!-- tm-shadow --><div class="b" style="left:1804px;top:0;width:17px;height:1118px;background:linear-gradient(90deg,rgba(0,0,0,.21) 0,rgba(0,0,0,.13) 22%,rgba(0,0,0,.06) 50%,rgba(0,0,0,.02) 75%,rgba(0,0,0,0) 100%)"></div>

<span class="t" style="left:40.97px;top:10.95px;transform:scale(1.0349,1.0000);font:400 18px/1 'Liberation Sans','Noto Sans CJK SC',sans-serif;color:#000;">HD Tune Pro 5.70 - 硬盘/固态硬盘实用程序</span>
<span class="t" style="left:9.22px;top:49.05px;transform:scale(0.9754,1.0000);font:500 18px/1 'Liberation Sans','Noto Sans CJK SC',sans-serif;color:#1a1a1a;">文件(<u>F</u>)</span>
<span class="t" style="left:94.60px;top:49.05px;font:500 18px/1 'Liberation Sans','Noto Sans CJK SC',sans-serif;color:#1a1a1a;">帮助(<u>H</u>)</span>
<span class="t" style="left:22.20px;top:92.60px;transform:scale(0.8833,1.0000);font:400 17px/1 'Liberation Mono','Noto Sans CJK SC',monospace;color:#797979;">XPG SPECTRIX S40G (256 gB)</span>
<span class="t" style="left:1209.00px;top:87.10px;transform:scale(1.0500,1.0000);font:400 20px/1 'Liberation Sans','Noto Sans CJK SC',sans-serif;color:#000;">—</span>
<span class="t" style="left:1240.40px;top:90.00px;transform:scale(1.0588,1.0000);font:700 18px/1 'Liberation Serif','Noto Serif CJK SC',serif;color:#000;-webkit-text-stroke:.7px #000;">℃</span>
<span class="t" style="left:1586.50px;top:91.80px;transform:scale(0.9857,1.0000);font:500 18px/1 'Liberation Sans','Noto Sans CJK SC',sans-serif;color:#a0a0a0;">退出</span>
<span class="t" style="left:62.70px;top:143.80px;font:500 18px/1 'Liberation Sans','Noto Sans CJK SC',sans-serif;color:#1a1a1a;">基准测试</span>
<span class="t" style="left:187.40px;top:146.80px;transform:scale(1.0229,1.0000);font:500 18px/1 'Liberation Sans','Noto Sans CJK SC',sans-serif;color:#1a1a1a;">信息</span>
<span class="t" style="left:276.00px;top:146.80px;transform:scale(0.9944,1.0000);font:500 18px/1 'Liberation Sans','Noto Sans CJK SC',sans-serif;color:#1a1a1a;">健康状态</span>
<span class="t" style="left:400.30px;top:146.80px;font:500 18px/1 'Liberation Sans','Noto Sans CJK SC',sans-serif;color:#1a1a1a;">错误扫描</span>
<span class="t" style="left:524.80px;top:146.80px;font:500 18px/1 'Liberation Sans','Noto Sans CJK SC',sans-serif;color:#1a1a1a;">文件夹占用率</span>
<span class="t" style="left:685.60px;top:146.80px;transform:scale(0.9944,1.0000);font:500 18px/1 'Liberation Sans','Noto Sans CJK SC',sans-serif;color:#1a1a1a;">擦除</span>
<span class="t" style="left:772.99px;top:146.80px;transform:scale(1.0141,1.0000);font:500 18px/1 'Liberation Sans','Noto Sans CJK SC',sans-serif;color:#1a1a1a;">文件基准</span>
<span class="t" style="left:898.60px;top:146.80px;font:500 18px/1 'Liberation Sans','Noto Sans CJK SC',sans-serif;color:#1a1a1a;">磁盘监视器</span>
<span class="t" style="left:1039.98px;top:146.80px;transform:scale(1.0094,1.0000);font:500 18px/1 'Liberation Sans','Noto Sans CJK SC',sans-serif;color:#1a1a1a;">自动噪音管理</span>
<span class="t" style="left:1200.79px;top:146.80px;transform:scale(1.0085,1.0000);font:500 18px/1 'Liberation Sans','Noto Sans CJK SC',sans-serif;color:#1a1a1a;">随机存取</span>
<span class="t" style="left:1324.99px;top:146.80px;transform:scale(1.0141,1.0000);font:500 18px/1 'Liberation Sans','Noto Sans CJK SC',sans-serif;color:#1a1a1a;">附加测试</span>
<span class="t" style="left:67.52px;top:236.95px;transform:scale(0.9771,1.0000);font:400 16px/1 'Liberation Sans','Noto Sans CJK SC',sans-serif;color:#202020;">MB/s</span>
<span class="t" style="left:1525.10px;top:237.45px;font:400 16px/1 'Liberation Sans','Noto Sans CJK SC',sans-serif;color:#202020;">ms</span>
<span class="t" style="left:24.09px;top:247.30px;transform:scale(1.0059,1.0000);font:400 16px/1 'Liberation Sans','Noto Sans CJK SC',sans-serif;color:#202020;">1500</span>
<span class="t" style="left:1552.76px;top:247.30px;transform:scale(1.0412,1.0000);font:400 16px/1 'Liberation Sans','Noto Sans CJK SC',sans-serif;color:#202020;">60</span>
<span class="t" style="left:24.09px;top:394.70px;transform:scale(1.0059,1.0000);font:400 16px/1 'Liberation Sans','Noto Sans CJK SC',sans-serif;color:#202020;">1250</span>
<span class="t" style="left:1552.76px;top:394.70px;transform:scale(1.0412,1.0000);font:400 16px/1 'Liberation Sans','Noto Sans CJK SC',sans-serif;color:#202020;">50</span>
<span class="t" style="left:24.09px;top:542.10px;transform:scale(1.0059,1.0000);font:400 16px/1 'Liberation Sans','Noto Sans CJK SC',sans-serif;color:#202020;">1000</span>
<span class="t" style="left:1553.80px;top:542.10px;transform:scale(0.9833,1.0000);font:400 16px/1 'Liberation Sans','Noto Sans CJK SC',sans-serif;color:#202020;">40</span>
<span class="t" style="left:32.00px;top:689.50px;transform:scale(1.0500,1.0000);font:400 16px/1 'Liberation Sans','Noto Sans CJK SC',sans-serif;color:#202020;">750</span>
<span class="t" style="left:1553.80px;top:689.50px;transform:scale(0.9833,1.0000);font:400 16px/1 'Liberation Sans','Noto Sans CJK SC',sans-serif;color:#202020;">30</span>
<span class="t" style="left:32.00px;top:836.90px;transform:scale(1.0500,1.0000);font:400 16px/1 'Liberation Sans','Noto Sans CJK SC',sans-serif;color:#202020;">500</span>
<span class="t" style="left:1553.80px;top:836.90px;transform:scale(0.9833,1.0000);font:400 16px/1 'Liberation Sans','Noto Sans CJK SC',sans-serif;color:#202020;">20</span>
<span class="t" style="left:33.05px;top:984.30px;transform:scale(1.0096,1.0000);font:400 16px/1 'Liberation Sans','Noto Sans CJK SC',sans-serif;color:#202020;">250</span>
<span class="t" style="left:1552.76px;top:984.30px;transform:scale(1.0412,1.0000);font:400 16px/1 'Liberation Sans','Noto Sans CJK SC',sans-serif;color:#202020;">10</span>
<span class="t" style="left:1659.80px;top:236.05px;transform:scale(1.0139,1.0000);font:500 18px/1 'Liberation Sans','Noto Sans CJK SC',sans-serif;color:#1a1a1a;">停止</span>
<span class="t" style="left:1632.00px;top:302.95px;font:500 18px/1 'Liberation Sans','Noto Sans CJK SC',sans-serif;color:#838383;">读取</span>
<span class="t" style="left:1630.99px;top:333.70px;transform:scale(1.0143,1.0000);font:500 18px/1 'Liberation Sans','Noto Sans CJK SC',sans-serif;color:#838383;">写入</span>
<span class="t" style="left:1632.00px;top:382.25px;font:500 18px/1 'Liberation Sans','Noto Sans CJK SC',sans-serif;color:#1a1a1a;">快捷行程</span>
<span class="t" style="left:1614.00px;top:423.80px;transform:scale(1.0500,1.0000);font:400 18px/1 'Liberation Sans','Noto Sans CJK SC',sans-serif;color:#838383;">40</span>
<span class="t" style="left:1737.60px;top:427.25px;transform:scale(1.0667,1.0000);font:400 18px/1 'Liberation Sans','Noto Sans CJK SC',sans-serif;color:#1a1a1a;">gB</span>
<span class="t" style="left:1632.00px;top:478.75px;font:500 18px/1 'Liberation Sans','Noto Sans CJK SC',sans-serif;color:#1a1a1a;">传输速率</span>
<span class="t" style="left:1607.49px;top:513.20px;transform:scale(1.0143,1.0000);font:500 18px/1 'Liberation Sans','Noto Sans CJK SC',sans-serif;color:#1a1a1a;">最低</span>
<span class="t" style="left:1631.57px;top:540.35px;transform:scale(1.0279,1.0000);font:700 17px/1 'Liberation Mono','Noto Sans CJK SC',monospace;color:#1fa9e8;">1285.3 MB/s</span>
<span class="t" style="left:1607.46px;top:577.70px;transform:scale(1.0441,1.0000);font:500 18px/1 'Liberation Sans','Noto Sans CJK SC',sans-serif;color:#1a1a1a;">最高</span>
<span class="t" style="left:1631.57px;top:605.35px;transform:scale(1.0279,1.0000);font:700 17px/1 'Liberation Mono','Noto Sans CJK SC',monospace;color:#1fa9e8;">1447.5 MB/s</span>
<span class="t" style="left:1607.46px;top:637.90px;transform:scale(1.0441,1.0000);font:500 18px/1 'Liberation Sans','Noto Sans CJK SC',sans-serif;color:#1a1a1a;">平均</span>
<span class="t" style="left:1632.20px;top:723.15px;font:500 18px/1 'Liberation Sans','Noto Sans CJK SC',sans-serif;color:#1a1a1a;">存取时间</span>
<span class="t" style="left:1631.19px;top:791.20px;transform:scale(1.0075,1.0000);font:500 18px/1 'Liberation Sans','Noto Sans CJK SC',sans-serif;color:#1a1a1a;">突发传输速率</span>
<span class="t" style="left:1607.71px;top:853.75px;transform:scale(0.9885,1.0000);font:500 18px/1 'Liberation Sans','Noto Sans CJK SC',sans-serif;color:#1a1a1a;">CPU 占用率</span>
<span class="t" style="left:1608.00px;top:940.50px;font:500 18px/1 'Liberation Sans','Noto Sans CJK SC',sans-serif;color:#1a1a1a;">通行数</span>
<span class="t" style="left:1615.50px;top:972.50px;font:400 18px/1 'Liberation Sans','Noto Sans CJK SC',sans-serif;color:#838383;">1</span>
<span class="t" style="left:1712.75px;top:1022.75px;transform:scale(1.0500,1.0000);font:400 18px/1 'Liberation Sans','Noto Sans CJK SC',sans-serif;color:#1a1a1a;">1/1</span>
<span class="t" style="left:1843.80px;top:7.50px;font:300 18px/1 'Liberation Sans','Noto Sans CJK SC',sans-serif;color:#8f8f8f;">任务管理器</span>
<span class="t" style="left:1809.00px;top:43.75px;font:400 18px/1 'Liberation Sans','Noto Sans CJK SC',sans-serif;color:#6a6a6a;">文件(F)</span>
<span class="t" style="left:1881.48px;top:43.75px;transform:scale(1.0200,1.0000);font:400 18px/1 'Liberation Sans','Noto Sans CJK SC',sans-serif;color:#6a6a6a;">选项(O)</span>
<span class="t" style="left:1957.77px;top:43.75px;transform:scale(1.0259,1.0000);font:400 18px/1 'Liberation Sans','Noto Sans CJK SC',sans-serif;color:#6a6a6a;">查看(V)</span>
<span class="t" style="left:1809.97px;top:80.35px;transform:scale(1.0286,1.0000);font:400 18px/1 'Liberation Sans','Noto Sans CJK SC',sans-serif;color:#000;">进程</span>
<span class="t" style="left:1860.00px;top:78.40px;transform:scale(0.9639,1.0000);font:400 18px/1 'Liberation Sans','Noto Sans CJK SC',sans-serif;color:#000;">性能</span>
<span class="t" style="left:1905.68px;top:80.35px;transform:scale(1.0217,1.0000);font:400 18px/1 'Liberation Sans','Noto Sans CJK SC',sans-serif;color:#000;">应用历史记录</span>
<span class="t" style="left:2026.30px;top:80.35px;transform:scale(1.0486,1.0000);font:400 18px/1 'Liberation Sans','Noto Sans CJK SC',sans-serif;color:#000;">启动</span>
<span class="t" style="left:2074.60px;top:80.35px;transform:scale(1.0647,1.0000);font:400 18px/1 'Liberation Sans','Noto Sans CJK SC',sans-serif;color:#000;">用户</span>
<span class="t" style="left:2122.50px;top:80.35px;transform:scale(1.0211,1.0000);font:400 18px/1 'Liberation Sans','Noto Sans CJK SC',sans-serif;color:#000;">详细信息</span>
<span class="t" style="left:2205.63px;top:80.35px;transform:scale(1.0676,1.0000);font:400 18px/1 'Liberation Sans','Noto Sans CJK SC',sans-serif;color:#000;">服务</span>
<span class="t" style="left:1930.04px;top:136.30px;transform:scale(0.9625,1.0000);font:400 24px/1 'Liberation Sans','Noto Sans CJK SC',sans-serif;color:#000;">CPU</span>
<span class="t" style="left:1931.99px;top:166.75px;transform:scale(1.0108,1.0000);font:400 18px/1 'Liberation Sans','Noto Sans CJK SC',sans-serif;color:#000;">6%&nbsp; 3.63 GHz</span>
<span class="t" style="left:1929.25px;top:228.10px;transform:scale(1.0244,1.0000);font:400 24px/1 'Liberation Sans','Noto Sans CJK SC',sans-serif;color:#000;">内存</span>
<span class="t" style="left:1931.96px;top:256.80px;transform:scale(1.0408,1.0000);font:400 18px/1 'Liberation Sans','Noto Sans CJK SC',sans-serif;color:#000;">8.2/31.9 GB (26%)</span>
<span class="t" style="left:1930.50px;top:319.45px;transform:scale(0.9793,1.0000);font:400 24px/1 'Liberation Sans','Noto Sans CJK SC',sans-serif;color:#000;">磁盘 0 (F:)</span>
<span class="t" style="left:1931.54px;top:348.45px;transform:scale(1.0571,1.0000);font:400 18px/1 'Liberation Sans','Noto Sans CJK SC',sans-serif;color:#000;">82%</span>
<span class="t" style="left:1930.50px;top:410.60px;transform:scale(1.0044,1.0000);font:400 24px/1 'Liberation Sans','Noto Sans CJK SC',sans-serif;color:#000;">磁盘 1 (D:)</span>
<span class="t" style="left:1933.00px;top:439.45px;transform:scale(0.9885,1.0000);font:400 18px/1 'Liberation Sans','Noto Sans CJK SC',sans-serif;color:#000;">0%</span>
<span class="t" style="left:1930.50px;top:501.60px;transform:scale(0.9777,1.0000);font:400 24px/1 'Liberation Sans','Noto Sans CJK SC',sans-serif;color:#000;">磁盘 2 (E:)</span>
<span class="t" style="left:1933.00px;top:530.45px;transform:scale(0.9885,1.0000);font:400 18px/1 'Liberation Sans','Noto Sans CJK SC',sans-serif;color:#000;">0%</span>
<span class="t" style="left:1930.50px;top:592.60px;transform:scale(0.9868,1.0000);font:400 24px/1 'Liberation Sans','Noto Sans CJK SC',sans-serif;color:#000;">磁盘 3 (C:)</span>
<span class="t" style="left:1933.00px;top:621.45px;transform:scale(0.9885,1.0000);font:400 18px/1 'Liberation Sans','Noto Sans CJK SC',sans-serif;color:#000;">0%</span>
<span class="t" style="left:1929.27px;top:683.40px;transform:scale(1.0162,1.0000);font:400 24px/1 'Liberation Sans','Noto Sans CJK SC',sans-serif;color:#000;">以太网</span>
<span class="t" style="left:1930.96px;top:713.65px;transform:scale(1.0196,1.0000);font:400 18px/1 'Liberation Sans','Noto Sans CJK SC',sans-serif;color:#000;">以太网</span>
<span class="t" style="left:1931.96px;top:737.25px;transform:scale(1.0429,1.0000);font:400 18px/1 'Liberation Sans','Noto Sans CJK SC',sans-serif;color:#000;"><span style="color:#707070">发送:</span> 0 <span style="color:#707070">接收:</span> 8.0 Kbps</span>
<span class="t" style="left:1930.01px;top:784.30px;transform:scale(0.9930,1.0000);font:400 24px/1 'Liberation Sans','Noto Sans CJK SC',sans-serif;color:#000;">GPU 0</span>
<span class="t" style="left:1932.09px;top:814.85px;transform:scale(1.0132,1.0000);font:400 18px/1 'Liberation Sans','Noto Sans CJK SC',sans-serif;color:#000;">NVIDIA GeForce RT...</span>
<span class="t" style="left:1932.00px;top:838.80px;font:400 18px/1 'Liberation Sans','Noto Sans CJK SC',sans-serif;color:#000;">2%</span>
<span class="t" style="left:2157.86px;top:138.20px;transform:scale(1.0383,1.0000);font:400 42px/1 'Liberation Sans','Noto Sans CJK SC',sans-serif;color:#000;">磁盘 0 (F:)</span>
<span class="t" style="left:2590.75px;top:153.45px;transform:scale(0.9457,1.0000);font:400 24px/1 'Liberation Sans','Noto Sans CJK SC',sans-serif;color:#000;">XPG SPECTRIX S40G</span>
<span class="t" style="left:2160.39px;top:197.55px;transform:scale(1.0145,1.0000);font:400 16px/1 'Liberation Sans','Noto Sans CJK SC',sans-serif;color:#707070;">活动时间</span>
<span class="t" style="left:2782.86px;top:197.25px;transform:scale(0.9425,1.0000);font:400 16px/1 'Liberation Sans','Noto Sans CJK SC',sans-serif;color:#707070;">100%</span>
<span class="t" style="left:2160.37px;top:686.45px;transform:scale(1.0297,1.0000);font:400 16px/1 'Liberation Sans','Noto Sans CJK SC',sans-serif;color:#707070;">60 秒</span>
<span class="t" style="left:2814.60px;top:685.45px;transform:scale(0.8556,1.0000);font:400 16px/1 'Liberation Sans','Noto Sans CJK SC',sans-serif;color:#707070;">0</span>
<span class="t" style="left:2161.40px;top:715.50px;transform:scale(0.9958,1.0000);font:400 16px/1 'Liberation Sans','Noto Sans CJK SC',sans-serif;color:#707070;">磁盘传输速率</span>
<span class="t" style="left:2755.27px;top:715.50px;transform:scale(1.0344,1.0000);font:400 16px/1 'Liberation Sans','Noto Sans CJK SC',sans-serif;color:#707070;">10 GB/秒</span>
<span class="t" style="left:2759.50px;top:798.05px;transform:scale(1.0375,1.0000);font:400 16px/1 'Liberation Sans','Noto Sans CJK SC',sans-serif;color:#707070;">2 GB/秒</span>
<span class="t" style="left:2160.37px;top:846.45px;transform:scale(1.0297,1.0000);font:400 16px/1 'Liberation Sans','Noto Sans CJK SC',sans-serif;color:#707070;">60 秒</span>
<span class="t" style="left:2814.60px;top:845.45px;transform:scale(0.8556,1.0000);font:400 16px/1 'Liberation Sans','Noto Sans CJK SC',sans-serif;color:#707070;">0</span>
<span class="t" style="left:2194.60px;top:638.80px;font:400 18px/1 'Liberation Sans','Noto Sans CJK SC',sans-serif;color:#575757;">磁盘处理读取或写入请求的时间百分</span>
<span class="t" style="left:2193.60px;top:662.10px;font:400 18px/1 'Liberation Sans','Noto Sans CJK SC',sans-serif;color:#575757;">比</span>
<span class="t" style="left:2160.79px;top:881.45px;transform:scale(1.0100,1.0000);font:400 18px/1 'Liberation Sans','Noto Sans CJK SC',sans-serif;color:#707070;">活动时间</span>
<span class="t" style="left:2263.10px;top:881.45px;font:400 18px/1 'Liberation Sans','Noto Sans CJK SC',sans-serif;color:#707070;">平均响应时间</span>
<span class="t" style="left:2160.75px;top:906.25px;transform:scale(1.0452,1.0000);font:400 32px/1 'Liberation Sans','Noto Sans CJK SC',sans-serif;color:#000;">82%</span>
<span class="t" style="left:2263.10px;top:907.35px;font:400 32px/1 'Liberation Sans','Noto Sans CJK SC',sans-serif;color:#000;">0 毫秒</span>
<span class="t" style="left:2174.00px;top:958.10px;transform:scale(0.9930,1.0000);font:400 18px/1 'Liberation Sans','Noto Sans CJK SC',sans-serif;color:#707070;">读取速度</span>
<span class="t" style="left:2173.64px;top:983.05px;transform:scale(1.0299,1.0000);font:400 32px/1 'Liberation Sans','Noto Sans CJK SC',sans-serif;color:#000;">1.4 GB/秒</span>
<span class="t" style="left:2358.98px;top:958.10px;transform:scale(1.0200,1.0000);font:400 18px/1 'Liberation Sans','Noto Sans CJK SC',sans-serif;color:#707070;">写入速度</span>
<span class="t" style="left:2359.96px;top:983.05px;transform:scale(1.0370,1.0000);font:400 32px/1 'Liberation Sans','Noto Sans CJK SC',sans-serif;color:#000;">0 KB/秒</span>
<span class="t" style="left:2491.29px;top:881.00px;transform:scale(1.0128,1.0000);font:400 18px/1 'Liberation Sans','Noto Sans CJK SC',sans-serif;color:#707070;">容量:</span>
<span class="t" style="left:2491.30px;top:910.50px;font:400 18px/1 'Liberation Sans','Noto Sans CJK SC',sans-serif;color:#707070;">已格式化:</span>
<span class="t" style="left:2491.30px;top:939.15px;font:400 18px/1 'Liberation Sans','Noto Sans CJK SC',sans-serif;color:#707070;">系统磁盘:</span>
<span class="t" style="left:2491.30px;top:968.75px;font:400 18px/1 'Liberation Sans','Noto Sans CJK SC',sans-serif;color:#707070;">页面文件:</span>
<span class="t" style="left:2588.77px;top:880.75px;transform:scale(1.0271,1.0000);font:400 18px/1 'Liberation Sans','Noto Sans CJK SC',sans-serif;color:#000;">239 GB</span>
<span class="t" style="left:2588.77px;top:910.15px;transform:scale(1.0271,1.0000);font:400 18px/1 'Liberation Sans','Noto Sans CJK SC',sans-serif;color:#000;">239 GB</span>
<span class="t" style="left:2588.78px;top:938.90px;transform:scale(1.0250,1.0000);font:400 18px/1 'Liberation Sans','Noto Sans CJK SC',sans-serif;color:#000;">否</span>
<span class="t" style="left:2588.78px;top:968.10px;transform:scale(1.0250,1.0000);font:400 18px/1 'Liberation Sans','Noto Sans CJK SC',sans-serif;color:#000;">否</span>
<span class="t" style="left:1854.57px;top:1075.90px;transform:scale(1.0253,1.0000);font:400 18px/1 'Liberation Sans','Noto Sans CJK SC',sans-serif;color:#1a1a1a;">简略信息(<u>D</u>)</span>
<span class="t" style="left:2010.50px;top:1076.50px;font:400 18px/1 'Liberation Sans','Noto Sans CJK SC',sans-serif;color:#0066cc;">打开资源监视器</span>
</body></html>
